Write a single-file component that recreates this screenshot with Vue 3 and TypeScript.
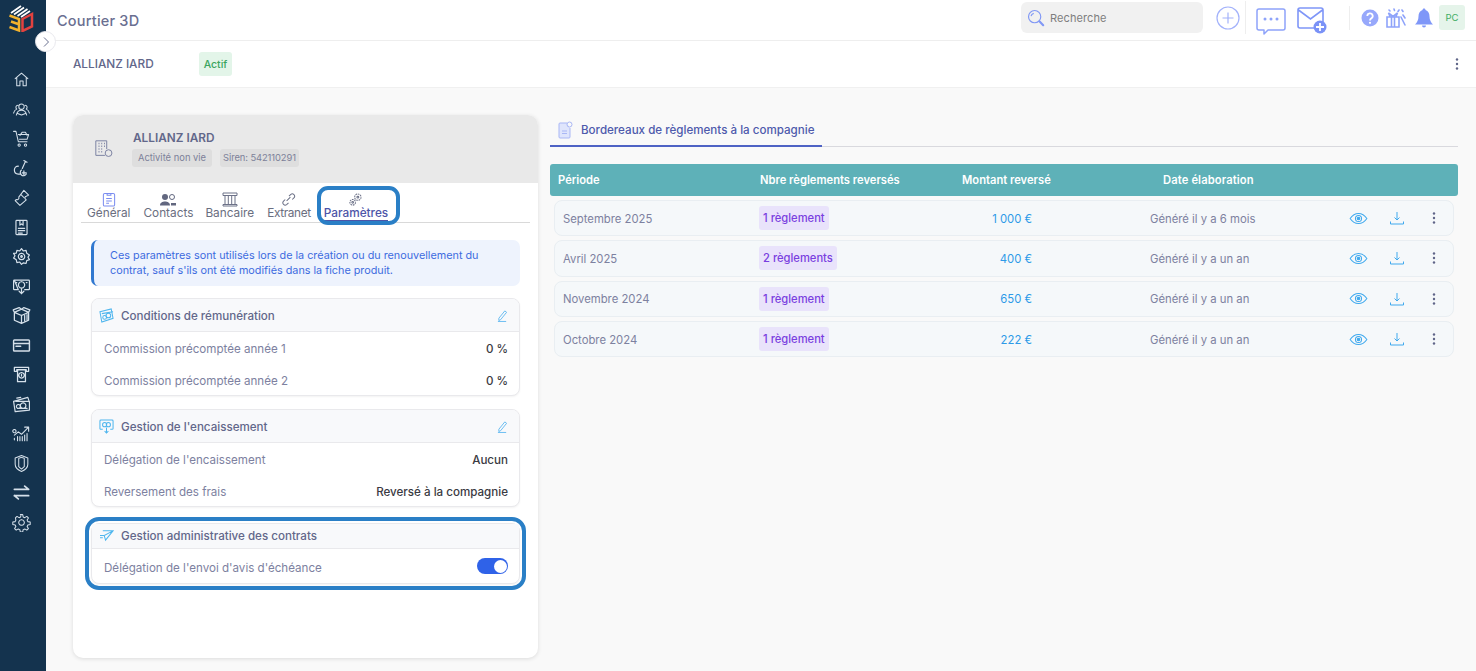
<script setup lang="ts">
interface Row { period: string; count: string; amount: string; date: string }
interface NavIcon { d: string; sw?: number }
const rows: Row[] = [
  { period: 'Septembre 2025', count: '1 règlement', amount: '1 000 €', date: 'Généré il y a 6 mois' },
  { period: 'Avril 2025', count: '2 règlements', amount: '400 €', date: 'Généré il y a un an' },
  { period: 'Novembre 2024', count: '1 règlement', amount: '650 €', date: 'Généré il y a un an' },
  { period: 'Octobre 2024', count: '1 règlement', amount: '222 €', date: 'Généré il y a un an' },
]
const navIcons: NavIcon[] = [
  { d: 'M4 11l8-7 8 7M6 9.500V20h4v-6h4v6h4V9.500' },
  { d: 'M12 5a3.400 3.400 0 1 1 0 6.800A3.400 3.400 0 0 1 12 5zM5.500 19c.8-4 3.400-6 6.500-6s5.700 2 6.500 6M7.500 6.500a2.800 2.800 0 0 0-1.500 5c-2 .8-3.500 2.500-4 5M16.500 6.500a2.800 2.800 0 0 1 1.500 5c2 .8 3.500 2.500 4 5M7 17l5 2 5-2' },
  { d: 'M2 3h3l3 13h11M8 7h13l-2 6H9.500M10 8l3-4h4l2 4M9 19a1.400 1.400 0 1 0 .1 0M17 19a1.400 1.400 0 1 0 .1 0' },
  { d: 'M8 9a5 5 0 0 0-5 5c0 3 2 5 5 5h2M17 3l-4 9M15 2l4 2M12 14a4 4 0 1 0 6 5M15 15v5M13 17.500h5', sw: 1.500 },
  { d: 'M15 3l6 6-3 1.500a2 2 0 0 0-1.500 3L18 15l-8 7-6-6 1.500-1.500a2.200 2.200 0 0 0 3-3L15 3zM12 9l3 3' },
  { d: 'M6 3h12a1 1 0 0 1 1 1v16a1 1 0 0 1-1 1H6a1 1 0 0 1-1-1V4a1 1 0 0 1 1-1zM10 3v6l2-1.500L14 9V3M8 13h8M8 16h8M8 19h5', sw: 1.500 },
  { d: 'M12 2l2.200 3 3.600-.8.800 3.600 3.400 2.200-1.800 3 1.800 3-3.400 1.200-.8 3.600-3.600-.8L12 22l-2.200-3-3.600.8-.8-3.600L2 14l1.800-3L2 8l3.400-.2.800-3.600 3.600.8L12 2zM12 8a4 4 0 1 0 .1 0M12 11a1 1 0 1 0 .1 0', sw: 1.500 },
  { d: 'M3 4h18a1 1 0 0 1 1 1v10a1 1 0 0 1-1 1h-5M8 16H3a1 1 0 0 1-1-1V5a1 1 0 0 1 1-1zM12 6a4 4 0 1 0 .1 0M12 14v7M9 18l3 3 3-3M5 7h1M18 7h1', sw: 1.500 },
  { d: 'M3 8l9-4 9 4-9 4-9-4zM3 8v10l9 4 9-4V8M12 12v10M3 8L1.500 5 9 2l3 2 3-2 7.500 3L21 8M16 12v7M19 11v7', sw: 1.600 },
  { d: 'M3 5h18a1 1 0 0 1 1 1v12a1 1 0 0 1-1 1H3a1 1 0 0 1-1-1V6a1 1 0 0 1 1-1zM2 9.500h20M5 13h6', sw: 1.800 },
  { d: 'M3 3h18v5h-3V6H6v2H3V3zM7 6h10v15H7V6zM12 9.500a3.500 3.500 0 1 0 .1 0M12 12v2', sw: 1.600 },
  { d: 'M2 8l18-5 2 6v10l-18 2-2-13zM5 8h17M8 12a2.500 2.500 0 1 0 .1 0M14 10a3.500 3.500 0 1 0 .1 0M6 4l5-1M7 17h12', sw: 1.500 },
  { d: 'M3 20l0-2M3 14l5-4 4 3 8-8M16 4h5v5M3 7a2 2 0 1 0 .1 0M7 21v-5M10 21v-5M13 21v-5M16 21v-7M19 21v-9', sw: 1.400 },
  { d: 'M12 2l8 3v8c0 4-3 7-8 9-5-2-8-5-8-9V5l8-3zM8.500 5.500v10.500l3.500 3 3.500-3V5.500q-3.500-2-7 0z' },
  { d: 'M3 8h18M16 4l5 4M21 16H3M8 20l-5-4', sw: 2.200 },
  { d: 'M10.500 2h3l.6 3 2 .9 2.600-1.600 2 2-1.600 2.600.9 2 3 .6v3l-3 .6-.9 2 1.600 2.600-2 2-2.600-1.600-2 .9-.6 3h-3l-.6-3-2-.9-2.600 1.600-2-2 1.600-2.600-.9-2-3-.6v-3l3-.6.9-2L4.300 6.300l2-2 2.600 1.600 2-.9.6-3zM12 8.500a3.500 3.500 0 1 0 .1 0' },
]
</script>

<template>
  <div class="app">
    <aside class="sidebar">
      <svg class="logo" viewBox="0 0 26 28" width="26" height="28" fill="none">
        <path d="M3 9l10-7M6 10.500l10-7M9.500 12l10-7M13 13l9-6" stroke="#ffffff" stroke-width="1.700" />
        <path d="M1.500 11.500L11 15v11.500l-9.500-3.500M3 17.500l7 2.500" stroke="#f2b22d" stroke-width="2.500" />
        <path d="M14.500 15L24 10v12.500L14.500 27z" stroke="#e2423f" stroke-width="2.500" />
      </svg>
      <nav class="nav">
        <span v-for="(ic, i) in navIcons" :key="i" class="nav-item">
          <svg viewBox="0 0 24 24" width="19" height="19" fill="none" stroke="#d5e0ea" :stroke-width="ic.sw ?? 1.300" stroke-linecap="round" stroke-linejoin="round"><path :d="ic.d" /></svg>
        </span>
      </nav>
    </aside>
    <button class="collapse" type="button" aria-label="Déplier">
      <svg viewBox="0 0 12 12" width="12" height="12" fill="none" stroke="#6a7190" stroke-width="1"><path d="M4 1.500L8.500 6 4 10.500" /></svg>
    </button>

    <div class="main">
      <header class="topbar">
        <div class="brand">Courtier 3D</div>
        <div class="search">
          <svg viewBox="0 0 20 20" width="18" height="18" fill="none" stroke="#8198f5" stroke-width="1.300"><circle cx="8.500" cy="8.500" r="6.800" /><path d="M4.500 8a4 4 0 0 1 3-3.200" /><path d="M14 14l4 4" stroke-width="2.400" stroke-linecap="round" /></svg>
          <span>Recherche</span>
        </div>
        <svg class="add" viewBox="0 0 24 24" width="24" height="24" fill="none" stroke="#a3b2fb" stroke-width="1.200"><circle cx="12" cy="12" r="11" /><path d="M12 6.500v11M6.500 12h11" /></svg>
        <i class="vline first"></i>
        <svg class="chat" viewBox="0 0 30 28" width="30" height="28" fill="none" stroke="#8ea3fa" stroke-width="1.500" stroke-linejoin="round"><path d="M3 2h24a2 2 0 0 1 2 2v17a2 2 0 0 1-2 2H12l-4 4v-4H3a2 2 0 0 1-2-2V4a2 2 0 0 1 2-2z" /><g fill="#8ea3fa" stroke="none"><circle cx="9" cy="12" r="1.500" /><circle cx="15" cy="12" r="1.500" /><circle cx="21" cy="12" r="1.500" /></g></svg>
        <svg class="mail" viewBox="0 0 30 28" width="30" height="28" fill="none" stroke="#7f96f8" stroke-width="1.600"><path d="M3 2h21a2 2 0 0 1 2 2v16a2 2 0 0 1-2 2H3a2 2 0 0 1-2-2V4a2 2 0 0 1 2-2zM1.500 4L13.500 13 25.500 4" /><circle cx="23" cy="21" r="6.500" fill="#7a92f7" stroke="none" /><path d="M23 17v8M19 21h8" stroke="#fff" stroke-width="1.800" /></svg>
        <i class="vline second"></i>
        <svg class="help" viewBox="0 0 18 18" width="18" height="18"><circle cx="9" cy="9" r="8.500" fill="#97a8fb" /><path d="M6.300 7a2.700 2.700 0 1 1 4 2.400c-.9.500-1.300 1-1.300 2" fill="none" stroke="#fff" stroke-width="1.800" /><circle cx="9" cy="13.800" r="1.100" fill="#fff" /></svg>
        <svg class="gift" viewBox="0 0 20 20" width="20" height="20" fill="none" stroke="#8ea3fa" stroke-width="1.600"><path d="M1 9h12v10H1zM5.500 9v10M8.500 9v10M4 8.500L2.500 5l4.500 3.500L11.500 5 10 8.500" /><path d="M15 9l4 8M17 7l2 3M3 2l1 1M8 1l.5 1.500M13 2l-1 1.500M16 2l1 1.500" stroke-linecap="round" /></svg>
        <svg class="bell" viewBox="0 0 20 20" width="20" height="20"><path d="M10 .5c1 0 1.500.7 1.500 1.500 2.800 1 4 3.500 4 6.500 0 3.500 1.500 6 3.500 8H1c2-2 3.500-4.500 3.500-8 0-3 1.200-5.500 4-6.500C8.500 1.200 9 .5 10 .5zM8 17.500h4a2 2 0 0 1-4 0z" fill="#7f97f8" /></svg>
        <div class="avatar">PC</div>
      </header>

      <div class="subbar">
        <span class="sub-name">ALLIANZ IARD</span>
        <span class="active">Actif</span>
        <svg class="sub-menu" viewBox="0 0 4 14" width="4" height="14" fill="#5f6588"><circle cx="2" cy="2.500" r="1.200" /><circle cx="2" cy="7" r="1.200" /><circle cx="2" cy="11.500" r="1.200" /></svg>
      </div>

      <div class="content">
        <section class="left">
          <div class="left-head">
            <span class="company-icon">
              <svg viewBox="0 0 22 22" width="20" height="20" fill="none" stroke="#7d83a3" stroke-width="1.100"><path d="M12 18H2V2h12v9" /><path d="M5 5h1M8 5h1M11 5h1M5 8h1M8 8h1M11 8h1M5 11h1M8 11h1M5 14h1M8 14h1" stroke-width="1.500" /><circle cx="16" cy="15.500" r="3.700" /></svg>
            </span>
            <div class="company-text">
              <div class="company-name">ALLIANZ IARD</div>
              <div class="company-tags"><span class="tag-a">Activité non vie</span><span class="tag-b">Siren: 542110291</span></div>
            </div>
          </div>
          <div class="left-body">
            <div class="tabs">
              <div class="tab">
                <svg viewBox="0 0 14 16" width="14" height="15" fill="none" stroke="#7a8df0" stroke-width="1.100"><rect x="1" y="1.500" width="12" height="13.500" rx="1.500" /><path d="M5 1.500v2h4v-2M4 7h6M4 9.500h6M4 12h3" /></svg>
                <span>Général</span>
              </div>
              <div class="tab tight">
                <svg viewBox="0 0 16 14" width="16" height="14" fill="#62677f"><circle cx="5" cy="4" r="3" /><path d="M0 12.500C0 9.500 2.500 8.500 5 8.500s5 1 5 4zM11 10h5v2.500h-5z" /><circle cx="12" cy="4" r="2.500" fill="none" stroke="#62677f" /></svg>
                <span>Contacts</span>
              </div>
              <div class="tab">
                <svg viewBox="0 0 16 15" width="16" height="15" fill="none" stroke="#6d7288" stroke-width="1"><path d="M1 1h14v2.500H1zM3 4v8M6.300 4v8M9.700 4v8M13 4v8M1 12.500h14v1.500H1z" /></svg>
                <span>Bancaire</span>
              </div>
              <div class="tab narrow">
                <svg viewBox="0 0 16 15" width="15" height="15" fill="none" stroke="#6d7288" stroke-width="1.100"><path d="M6 9l4-4M4.500 7.500l-2 2a2.500 2.500 0 0 0 3.500 3.500l2-2M8.500 4l2-2a2.500 2.500 0 0 1 3.500 3.500l-2 2" /></svg>
                <span>Extranet</span>
              </div>
              <div class="tab current">
                <svg viewBox="0 0 16 15" width="15" height="15" fill="none" stroke="#6d7288" stroke-width="1.100"><circle cx="10.500" cy="5" r="3.400" stroke-dasharray="1.800 .8" /><circle cx="5" cy="10.500" r="3" stroke-dasharray="1.800 .8" /><circle cx="10.500" cy="5" r="1" /><circle cx="5" cy="10.500" r=".9" /></svg>
                <span>Paramètres</span>
                <i class="ring"></i>
              </div>
            </div>

            <div class="info">Ces paramètres sont utilisés lors de la création ou du renouvellement du<br />contrat, sauf s'ils ont été modifiés dans la fiche produit.</div>

            <div class="card">
              <div class="card-head">
                <svg viewBox="0 0 16 16" width="15" height="15" fill="none" stroke="#4fb6ee" stroke-width="1.100"><path d="M1 4l12-3 2 10-12 4L1 4z" /><path d="M3 6l12-2" /><circle cx="6" cy="10" r="2" /><circle cx="10" cy="8" r="2.500" /></svg>
                <span class="card-title">Conditions de rémunération</span>
                <svg class="edit" viewBox="0 0 12 14" width="11" height="13" fill="none" stroke="#5fb8f0" stroke-width="1"><path d="M2 10L8.500 2l2 1.500L4 11.500 2 12.500V10zM1 13.500h9" /></svg>
              </div>
              <div class="card-row"><span>Commission précomptée année 1</span><b>0 %</b></div>
              <div class="card-row"><span>Commission précomptée année 2</span><b>0 %</b></div>
            </div>

            <div class="card">
              <div class="card-head">
                <svg viewBox="0 0 16 16" width="15" height="15" fill="none" stroke="#4fb6ee" stroke-width="1.100"><path d="M4 11H2a1 1 0 0 1-1-1V2a1 1 0 0 1 1-1h12a1 1 0 0 1 1 1v8a1 1 0 0 1-1 1h-2" /><circle cx="6" cy="6" r="2.200" /><circle cx="10" cy="6" r="2.200" /><path d="M8 9v6M6 13l2 2 2-2" /></svg>
                <span class="card-title">Gestion de l'encaissement</span>
                <svg class="edit" viewBox="0 0 12 14" width="11" height="13" fill="none" stroke="#5fb8f0" stroke-width="1"><path d="M2 10L8.500 2l2 1.500L4 11.500 2 12.500V10zM1 13.500h9" /></svg>
              </div>
              <div class="card-row"><span>Délégation de l'encaissement</span><b>Aucun</b></div>
              <div class="card-row"><span>Reversement des frais</span><b>Reversé à la compagnie</b></div>
            </div>

            <div class="card highlighted">
              <div class="card-head short">
                <svg viewBox="0 0 16 14" width="15" height="13" fill="none" stroke="#4fb6ee" stroke-width="1.100"><path d="M4 2h11L7 12l-1.500-5L15 2M1 7h4M1 9.500h3" /></svg>
                <span class="card-title">Gestion administrative des contrats</span>
              </div>
              <div class="card-row toggle-row"><span>Délégation de l'envoi d'avis d'échéance</span><i class="toggle"><i class="knob"></i></i></div>
            </div>
          </div>
        </section>

        <section class="right">
          <div class="right-tabs">
            <div class="right-tab">
              <svg viewBox="0 0 16 18" width="16" height="18" fill="none" stroke="#a9b7f5" stroke-width="1"><path d="M10 2H3a1 1 0 0 0-1 1v13a1 1 0 0 0 1 1h9a1 1 0 0 0 1-1V7" fill="#dfe5fc" /><circle cx="12.500" cy="3.500" r="2.500" /><path d="M5 10h5M5 12.500h5" /></svg>
              <span>Bordereaux de règlements à la compagnie</span>
            </div>
          </div>
          <div class="thead">
            <span class="c1">Période</span>
            <span class="c2">Nbre règlements reversés</span>
            <span class="c3">Montant reversé</span>
            <span class="c4">Date élaboration</span>
          </div>
          <div class="tbody">
            <div v-for="r in rows" :key="r.period" class="trow">
              <span class="t1">{{ r.period }}</span>
              <span class="t2"><em>{{ r.count }}</em></span>
              <span class="t3">{{ r.amount }}</span>
              <span class="t4">{{ r.date }}</span>
              <span class="t5">
                <svg viewBox="0 0 20 14" width="19" height="13" fill="none" stroke="#3fa9ee" stroke-width="1.100"><path d="M1 7c2.500-3.700 5.500-5.500 9-5.500S16.500 3.300 19 7c-2.500 3.700-5.500 5.500-9 5.500S3.500 10.700 1 7z" /><circle cx="10" cy="7" r="3.300" /><circle cx="10" cy="7" r="1.400" fill="#3fa9ee" /></svg>
              </span>
              <span class="t6">
                <svg viewBox="0 0 14 14" width="14" height="14" fill="none" stroke="#3fa9ee" stroke-width="1"><path d="M7 1v8M4.500 6.500L7 9l2.500-2.500M.5 10.500v2.500h13v-2.500" /></svg>
              </span>
              <span class="t7">
                <svg viewBox="0 0 4 14" width="4" height="14" fill="#5f6588"><circle cx="2" cy="2.500" r="1.200" /><circle cx="2" cy="7" r="1.200" /><circle cx="2" cy="11.500" r="1.200" /></svg>
              </span>
            </div>
          </div>
        </section>
      </div>
    </div>
  </div>
</template>

<style>
html, body { margin: 0; height: 100%; overflow: hidden; background: #f9f9f9; }
</style>

<style scoped>
* { box-sizing: border-box; }
.app { position: relative; display: flex; width: 1476px; height: 671px; overflow: hidden; font-family: Inter, "Noto Sans", sans-serif; font-size: 11px; color: #62678a; background: #f9f9f9; }
.sidebar { width: 46px; flex: none; background: #14334e; display: flex; flex-direction: column; align-items: center; }
.logo { margin: 4px 0 0 -5px; flex: none; }
.nav { margin-top: 33px; display: flex; flex-direction: column; align-items: center; }
.nav-item { height: 29.5px; display: flex; align-items: center; justify-content: center; margin-left: -3px; }
.collapse { position: absolute; left: 35px; top: 31px; width: 21px; height: 21px; padding: 0; border: 1px solid #e9e9ee; border-radius: 50%; background: #fff; display: flex; align-items: center; justify-content: center; }
.main { flex: 1; min-width: 0; display: flex; flex-direction: column; }
.topbar { height: 41px; flex: none; background: #fff; border-bottom: 1px solid #eeeeee; display: flex; align-items: center; padding-left: 11px; }
.brand { font-size: 14.500px; font-weight: 500; color: #6a6f91; margin-right: auto; letter-spacing: .2px; }
.search { width: 182px; height: 31px; margin-top: -5px; background: #f1f1f1; border-radius: 6px; display: flex; align-items: center; gap: 5px; padding-left: 6px; color: #7e7e7e; font-size: 11px; letter-spacing: .1px; }
.add { margin-left: 13px; margin-top: -5px; }
.vline { width: 1px; background: #eeeeee; display: block; }
.vline.first { height: 33px; margin: -5px 0 0 5px; }
.vline.second { height: 24px; margin: -5px 0 0 22px; }
.chat { margin: 1px 0 0 10px; }
.mail { margin: -1px 0 0 11px; }
.help { margin: -5px 0 0 11px; }
.gift { margin: -4px 0 0 7px; }
.bell { margin: -4px 0 0 8px; }
.avatar { width: 26px; height: 25px; margin: -5px 11px 0 5px; border-radius: 3px; background: #e5f4ea; color: #3fae64; font-size: 9.500px; display: flex; align-items: center; justify-content: center; }
.subbar { height: 47px; flex: none; background: #fff; border-bottom: 1px solid #f0f0f0; display: flex; align-items: center; padding: 0 17px 0 27px; }
.sub-name { font-size: 11.800px; font-weight: 500; color: #62678a; width: 126px; }
.active { width: 33px; height: 24px; border-radius: 3px; background: #e3f5e9; color: #3ba55f; font-weight: 500; font-size: 10.500px; display: flex; align-items: center; justify-content: center; }
.sub-menu { margin-left: auto; }
.content { flex: 1; display: flex; gap: 12px; padding: 27px 18px 13px 27px; min-height: 0; }
.left { width: 465px; flex: none; background: #fff; border-radius: 10px; box-shadow: 0 1px 4px rgba(0, 0, 0, .12); overflow: hidden; display: flex; flex-direction: column; }
.left-head { height: 68px; flex: none; background: #e9e9e9; display: flex; align-items: center; padding-left: 21px; }
.company-icon { width: 20px; display: flex; margin-right: 19px; }
.company-name { font-size: 11.800px; font-weight: 600; color: #62678a; line-height: 14px; margin-top: -1px; }
.company-tags { display: flex; gap: 8px; margin-top: 4px; margin-left: -1px; }
.company-tags span { background: #dedede; border-radius: 3px; height: 18px; text-align: center; line-height: 18px; font-size: 9.400px; color: #7d8199; white-space: nowrap; }
.tag-a { width: 80px; }
.tag-b { width: 79px; letter-spacing: -.1px; }
.left-body { flex: 1; padding: 3px 18px 0 18px; }
.tabs { display: flex; gap: 13px; height: 37px; margin: 0 -10px 0 -10px; padding-left: 6px; border-bottom: 1px solid #d9d9d9; }
.tab { position: relative; display: flex; flex-direction: column; align-items: center; justify-content: flex-end; font-size: 11.800px; color: #6a6e80; line-height: 13px; padding-bottom: 2px; white-space: nowrap; }
.tab.tight { margin-right: -1px; }
.tab.narrow { letter-spacing: -.35px; }
.tab.current { color: #4d55a8; font-weight: 500; font-size: 11.800px; border-bottom: 2px solid #4d55a8; padding-bottom: 0; }
.ring { position: absolute; inset: 0 -12px -5px -7px; border: 4px solid #2a7fc6; border-radius: 11px; }
.info { height: 46px; margin-top: 17px; background: #eef3fd; border-left: 3px solid #3178d0; border-radius: 7px; padding: 8px 0 0 16px; color: #3d6be0; font-size: 10.800px; line-height: 15px; white-space: nowrap; }
.card { margin-top: 12px; border: 1px solid #e9e9ec; border-radius: 8px; background: #fff; box-shadow: 0 1px 2px rgba(0, 0, 0, .05); overflow: hidden; height: 98px; }
.card + .card { margin-top: 13px; }
.card-head { height: 33px; background: #f8f9fb; border-bottom: 1px solid #e9e9ec; display: flex; align-items: center; padding: 1px 11px 0 7px; gap: 7px; }
.card-head.short { height: 25px; padding: 0 11px 1px 7px; }
.card-title { font-size: 11.600px; font-weight: 500; color: #62678a; }
.edit { margin-left: auto; }
.card-row { display: flex; justify-content: space-between; align-items: center; height: 32px; padding: 1px 11px 0 12px; font-size: 11.600px; color: #7d81a0; white-space: nowrap; }
.card-row b { font-weight: 500; color: #3a3a42; }
.highlighted { height: 61px; overflow: visible; outline: 4px solid #2a7fc6; outline-offset: 2px; }
.card + .highlighted { margin-top: 16px; }
.toggle-row { height: 34px; padding-top: 3px; }
.toggle { width: 31px; height: 16px; border-radius: 8px; background: #2f62e8; position: relative; display: block; margin-top: -3px; }
.knob { position: absolute; right: 1.500px; top: 1.500px; width: 13px; height: 13px; border-radius: 50%; background: #fff; display: block; }
.right { flex: 1; min-width: 0; }
.right-tabs { height: 32px; border-bottom: 1px solid #d9d9de; }
.right-tab { width: 272px; height: 32px; border-bottom: 2px solid #4e62c4; display: flex; align-items: center; gap: 8px; padding: 0 0 0 7px; color: #4e5aac; font-size: 11.600px; font-weight: 500; white-space: nowrap; }
.thead { margin-top: 17px; height: 32px; background: #5eb1b8; border-radius: 3px; display: flex; align-items: center; color: #fff; font-weight: 600; font-size: 11.200px; white-space: nowrap; }
.thead span { display: block; }
.c1 { width: 210px; padding-left: 8px; }
.c2 { width: 202px; }
.c3 { width: 201px; }
.c4 { letter-spacing: .12px; }
.tbody { margin: 4px 4px 0; display: flex; flex-direction: column; gap: 4px; }
.trow { height: 36.300px; background: #f5f8fa; border: 1px solid #e9eef2; border-radius: 8px; display: flex; align-items: center; font-size: 11.300px; color: #7d81a0; white-space: nowrap; }
.t1 { width: 204px; padding: 1px 0 0 8px; flex: none; }
.t2 { width: 200px; flex: none; }
.t2 em { font-style: normal; display: inline-block; height: 24px; line-height: 25px; padding: 0 4px; background: #e9e3fb; border-radius: 3px; color: #7a3fe0; font-weight: 500; font-size: 11.200px; }
.t3 { width: 73px; padding-top: 1px; flex: none; text-align: right; color: #2d9ae8; }
.t4 { width: 118px; padding-top: 1px; flex: none; margin-left: 118px; }
.t5 { margin-left: 81px; width: 19px; display: flex; }
.t6 { margin-left: 22px; width: 14px; display: flex; }
.t7 { margin-left: 28px; width: 4px; display: flex; }
</style>
